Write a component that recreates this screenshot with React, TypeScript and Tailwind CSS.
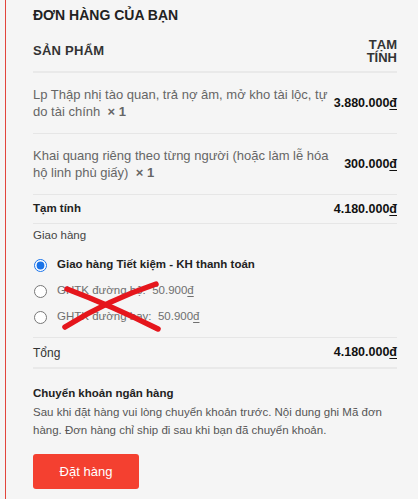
import React from "react";

const font = "font-['Liberation_Sans',Arial,sans-serif]";

function Radio({ checked }: { checked?: boolean }) {
  return (
    <input
      type="radio"
      name="ship"
      defaultChecked={checked}
      className="m-0 ml-[1px] h-[13px] w-[13px] shrink-0 accent-[#1a73e8]"
    />
  );
}

function Price({ v }: { v: string }) {
  return (
    <span className="text-[12.5px] font-bold text-[#111]">
      {v}
      <span className="underline decoration-1 underline-offset-[2px]">đ</span>
    </span>
  );
}

export default function App() {
  return (
    <div className={`relative min-h-[499px] w-[418px] bg-[#f5f5f5] pl-[5px] ${font}`}>
      <div className="min-h-[499px] border-l border-[#e2453c] pl-[27px] pr-[21px]">
        <h3 className="pt-[7px] text-[14px] font-bold uppercase leading-[16px] text-[#222]">
          Đơn hàng của bạn
        </h3>

        <div className="mt-[7px] flex h-[43px] items-center justify-between border-b-2 border-[#e9e9e9]">
          <span className="text-[13px] font-bold uppercase tracking-[0.02em] text-[#333]">Sản phẩm</span>
          <span className="w-[34px] text-right text-[13px] font-bold uppercase leading-[13px] text-[#333]">
            Tạm tính
          </span>
        </div>

        <div className="flex items-center justify-between border-b border-[#e6e6e6] py-[13px]">
          <div className="w-[296px] text-[13px] leading-[17px] text-[#666]">
            Lp Thập nhị tào quan, trả nợ âm, mở kho tài lộc, tự do tài chính{"\u00a0"}{" "}
            <strong className="font-bold">×{"\u00a0"}1</strong>
          </div>
          <Price v="3.880.000" />
        </div>

        <div className="flex items-center justify-between border-b border-[#e6e6e6] py-[13px]">
          <div className="w-[296px] text-[13px] leading-[17px] text-[#666]">
            Khai quang riêng theo từng người (hoặc làm lễ hóa hộ linh phù giấy){"\u00a0"}{" "}
            <strong className="font-bold">×{"\u00a0"}1</strong>
          </div>
          <Price v="300.000" />
        </div>

        <div className="flex h-[29px] items-center justify-between border-b border-[#e6e6e6]">
          <span className="text-[11.5px] font-bold text-[#222]">Tạm tính</span>
          <Price v="4.180.000" />
        </div>

        <div className="border-b border-[#e6e6e6] pb-[7px] pt-[3px]">
          <div className="text-[11.5px] leading-[16px] text-[#444]">Giao hàng</div>
          <div className="mt-[9px] flex flex-col">
            <label className="flex h-[26px] items-center gap-[10px]">
              <Radio checked />
              <span className="text-[11.5px] font-bold text-[#222]">Giao hàng Tiết kiệm - KH thanh toán</span>
            </label>
            <label className="flex h-[26px] items-center gap-[10px]">
              <Radio />
              <span className="text-[11.5px] text-[#6f6f6f]">
                GHTK đường bộ:{"\u00a0"} 50.900<span className="underline underline-offset-[2px]">đ</span>
              </span>
            </label>
            <label className="flex h-[26px] items-center gap-[10px]">
              <Radio />
              <span className="text-[11.5px] text-[#6f6f6f]">
                GHTK đường bay:{"\u00a0"} 50.900<span className="underline underline-offset-[2px]">đ</span>
              </span>
            </label>
          </div>
        </div>

        <div className="flex h-[31px] items-center justify-between border-b-2 border-[#e9e9e9]">
          <span className="text-[12px] text-[#333]">Tổng</span>
          <Price v="4.180.000" />
        </div>

        <div className="mt-[16px] text-[11.5px] font-bold leading-[16px] text-[#222]">Chuyển khoản ngân hàng</div>
        <p className="mt-[2px] text-[11.5px] leading-[18px] text-[#555]">
          Sau khi đặt hàng vui lòng chuyển khoản trước. Nội dung ghi Mã đơn hàng. Đơn hàng chỉ ship đi sau khi bạn đã chuyển khoản.
        </p>

        <button className="mt-[15px] flex h-[35px] w-[106px] items-center justify-center rounded-[3px] bg-[#f44030] text-[13px] text-white">
          Đặt hàng
        </button>
      </div>

      <svg
        className="pointer-events-none absolute left-0 top-0 h-[499px] w-[418px]"
        viewBox="0 0 418 499"
      >
        <defs>
          <filter id="soft" x="-10%" y="-10%" width="120%" height="120%">
            <feGaussianBlur stdDeviation="0.6" />
          </filter>
        </defs>
        <g stroke="#e5141c" strokeWidth="5.5" strokeLinecap="round" fill="none" filter="url(#soft)">
          <path d="M67 289 Q112 306 158 329" />
          <path d="M65 327 Q108 300 156 284" />
        </g>
      </svg>
    </div>
  );
}
